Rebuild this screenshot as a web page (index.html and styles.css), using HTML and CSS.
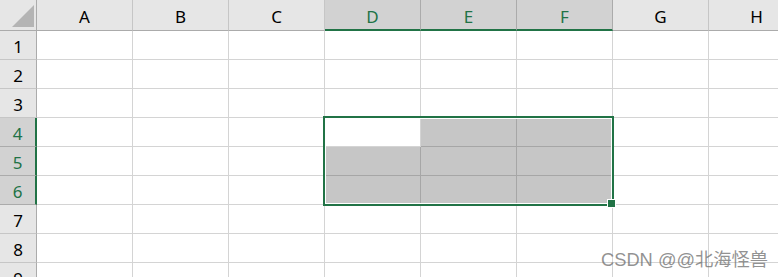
FILE: index.html
```html
<!DOCTYPE html>
<html lang="en">
<head>
    <meta charset="UTF-8">
    <title>Sheet</title>
    <link rel="stylesheet" href="styles.css">
</head>
<body>
    <div class="sheet">
        <div class="grid" id="grid">
            <!-- cells are added by the script below -->
        </div>
        <div class="selection"></div>
        <div class="fill-handle"></div>
        <div class="watermark">CSDN @@北海怪兽</div>
    </div>

    <script>
        const columns = ['A', 'B', 'C', 'D', 'E', 'F', 'G', 'H'];
        const rowCount = 9;
        const grid = document.getElementById('grid');

        // selected block D4:F6, active cell D4
        const selCols = ['D', 'E', 'F'];
        const selRows = [4, 5, 6];

        function cell(cls, text) {
            const div = document.createElement('div');
            div.className = cls;
            if (text !== undefined) div.textContent = text;
            grid.appendChild(div);
        }

        cell('corner');
        columns.forEach(col => {
            cell(selCols.includes(col) ? 'col-head selected' : 'col-head', col);
        });

        for (let r = 1; r <= rowCount; r++) {
            cell(selRows.includes(r) ? 'row-head selected' : 'row-head', r);
            columns.forEach(col => {
                const inSel = selRows.includes(r) && selCols.includes(col);
                const active = r === 4 && col === 'D';
                cell(inSel && !active ? 'cell filled' : 'cell');
            });
        }
    </script>
</body>
</html>
```

FILE: styles.css
```css
body, html {
    margin: 0;
    padding: 0;
    background: white;
}
.sheet {
    position: relative;
    width: 778px;
    height: 277px;
    overflow: hidden;
    font-family: 'Noto Sans', 'Open Sans', sans-serif;
}
.grid {
    display: grid;
    grid-template-columns: 37px repeat(8, 96px);
    grid-template-rows: 31px repeat(9, 29px);
}
.grid > div {
    box-sizing: border-box;
}
.corner {
    background: #e6e6e6;
    border-right: 1px solid #ababab;
    border-bottom: 1px solid #ababab;
    position: relative;
}
.corner::after {
    content: '';
    position: absolute;
    left: 12px;
    top: 5px;
    width: 0;
    height: 0;
    border-left: 22px solid transparent;
    border-bottom: 22px solid #b4b4b4;
}
.col-head, .row-head {
    background: #e6e6e6;
    color: #000;
    font-size: 17px;
    display: flex;
    justify-content: center;
    align-items: center;
    padding-top: 3px;
}
.col-head {
    border-right: 1px solid #c6c6c6;
    border-bottom: 1px solid #ababab;
}
.row-head {
    border-right: 1px solid #ababab;
    border-bottom: 1px solid #c6c6c6;
}
.col-head.selected {
    background: #d2d2d2;
    color: #217346;
    border-right-color: #ababab;
    border-bottom: 2px solid #217346;
}
.row-head.selected {
    background: #d2d2d2;
    color: #217346;
    border-bottom-color: #ababab;
    border-right: 2px solid #217346;
}
.cell {
    border-right: 1px solid #d4d4d4;
    border-bottom: 1px solid #d4d4d4;
}
.cell.filled {
    background: #c6c6c6;
    border-color: #a6a6a6;
}
.selection {
    position: absolute;
    left: 323px;
    top: 116px;
    width: 291px;
    height: 90px;
    box-sizing: border-box;
    border: 2px solid #217346;
    box-shadow: inset 0 0 0 1px white;
}
.fill-handle {
    position: absolute;
    left: 607px;
    top: 199px;
    width: 9px;
    height: 9px;
    box-sizing: border-box;
    background: #217346;
    border: 1px solid white;
}
.watermark {
    position: absolute;
    left: 601px;
    top: 245px;
    font-family: 'Liberation Sans', 'Noto Sans CJK SC', sans-serif;
    font-size: 18.3px;
    color: rgba(110, 110, 110, 0.75);
    white-space: nowrap;
}
```
